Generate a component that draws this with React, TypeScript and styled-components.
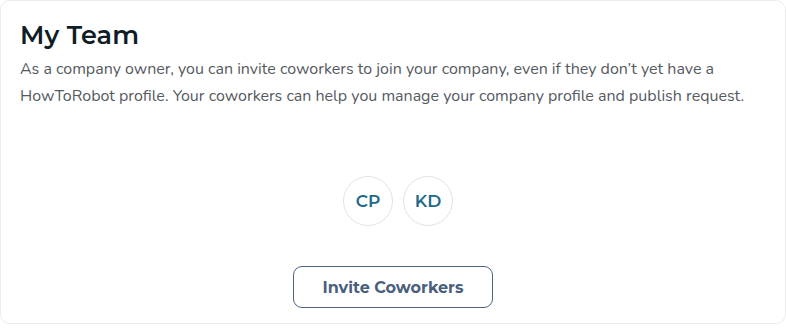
import React from "react";
import styled, { createGlobalStyle } from "styled-components";

const Global = createGlobalStyle`
  html, body { margin: 0; padding: 0; background: #ffffff; }
  * { box-sizing: border-box; }
`;

const Card = styled.section`
  width: 786px;
  height: 324px;
  border: 1px solid #ececec;
  border-radius: 10px;
  background: #fff;
  padding: 18px 19px 0 19px;
  display: flex;
  flex-direction: column;
`;

const Title = styled.h2`
  margin: 0;
  font-family: "Montserrat", "Inter", "Noto Sans", sans-serif;
  font-weight: 600;
  font-size: 25.5px;
  line-height: 32px;
  color: #0f1d26;
  letter-spacing: 0.2px;
`;

const Desc = styled.p`
  margin: 5px 0 0 0;
  font-family: "Nunito", "Lato", "Noto Sans", sans-serif;
  font-size: 16px;
  line-height: 27px;
  color: #555a5f;
  max-width: 745px;
`;

const Members = styled.div`
  margin-top: 66px;
  padding-left: 10px;
  display: flex;
  justify-content: center;
  gap: 10px;
`;

const Avatar = styled.div`
  width: 50px;
  height: 50px;
  border-radius: 50%;
  border: 1px solid #e2e2e2;
  display: flex;
  align-items: center;
  justify-content: center;
  font-family: "Montserrat", "Inter", "Noto Sans", sans-serif;
  font-weight: 600;
  font-size: 17px;
  color: #1e6a8c;
`;

const Actions = styled.div`
  margin-top: 40px;
  display: flex;
  justify-content: center;
`;

const Button = styled.button`
  width: 200px;
  height: 42px;
  border: 1px solid #4d6383;
  border-radius: 9px;
  background: #fff;
  font-family: "Montserrat", "Inter", "Noto Sans", sans-serif;
  font-weight: 700;
  font-size: 16px;
  color: #4a5f7d;
  cursor: pointer;
`;

export default function App() {
  const members = ["CP", "KD"];
  return (
    <>
      <Global />
      <Card>
        <Title>My Team</Title>
        <Desc>
          As a company owner, you can invite coworkers to join your company, even if they don’t yet have a
          HowToRobot profile. Your coworkers can help you manage your company profile and publish request.
        </Desc>
        <Members>
          {members.map((m) => (
            <Avatar key={m}>{m}</Avatar>
          ))}
        </Members>
        <Actions>
          <Button>Invite Coworkers</Button>
        </Actions>
      </Card>
    </>
  );
}
